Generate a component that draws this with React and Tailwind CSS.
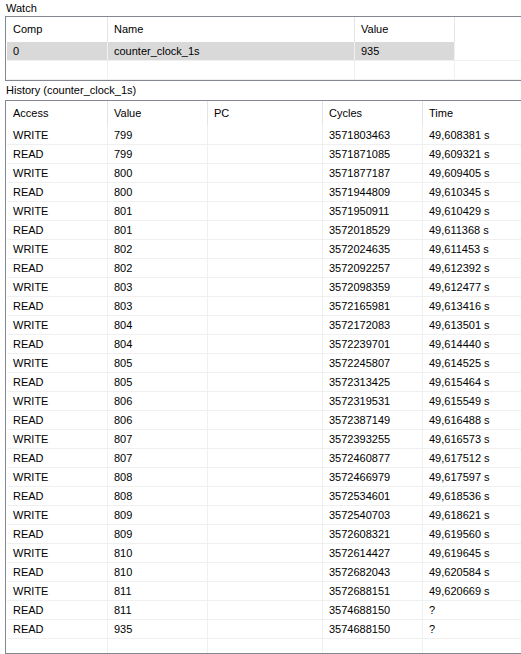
const watchCols = [
    { key: 'comp', label: 'Comp', w: 'w-[101px]' },
    { key: 'name', label: 'Name', w: 'w-[247px]' },
    { key: 'value', label: 'Value', w: 'w-[100px]' },
]

const historyCols = [
    { key: 'access', label: 'Access', w: 'w-[101px]' },
    { key: 'value', label: 'Value', w: 'w-[100px]' },
    { key: 'pc', label: 'PC', w: 'w-[115px]' },
    { key: 'cycles', label: 'Cycles', w: 'w-[100px]' },
    { key: 'time', label: 'Time', w: 'w-[100px]' },
]

const raw = [
    ['WRITE', '799', '3571803463', '49,608381 s'],
    ['READ', '799', '3571871085', '49,609321 s'],
    ['WRITE', '800', '3571877187', '49,609405 s'],
    ['READ', '800', '3571944809', '49,610345 s'],
    ['WRITE', '801', '3571950911', '49,610429 s'],
    ['READ', '801', '3572018529', '49,611368 s'],
    ['WRITE', '802', '3572024635', '49,611453 s'],
    ['READ', '802', '3572092257', '49,612392 s'],
    ['WRITE', '803', '3572098359', '49,612477 s'],
    ['READ', '803', '3572165981', '49,613416 s'],
    ['WRITE', '804', '3572172083', '49,613501 s'],
    ['READ', '804', '3572239701', '49,614440 s'],
    ['WRITE', '805', '3572245807', '49,614525 s'],
    ['READ', '805', '3572313425', '49,615464 s'],
    ['WRITE', '806', '3572319531', '49,615549 s'],
    ['READ', '806', '3572387149', '49,616488 s'],
    ['WRITE', '807', '3572393255', '49,616573 s'],
    ['READ', '807', '3572460877', '49,617512 s'],
    ['WRITE', '808', '3572466979', '49,617597 s'],
    ['READ', '808', '3572534601', '49,618536 s'],
    ['WRITE', '809', '3572540703', '49,618621 s'],
    ['READ', '809', '3572608321', '49,619560 s'],
    ['WRITE', '810', '3572614427', '49,619645 s'],
    ['READ', '810', '3572682043', '49,620584 s'],
    ['WRITE', '811', '3572688151', '49,620669 s'],
    ['READ', '811', '3574688150', '?'],
    ['READ', '935', '3574688150', '?'],
]

const history = raw.map(([access, value, cycles, time]) => ({ access, value, pc: '', cycles, time }))

const HeaderRow = ({ cols }) => (
    <div className="flex h-[25px] shrink-0">
        {cols.map((c) => (
            <div key={c.key} className={`${c.w} shrink-0 border-r border-[#e5e5e5] pl-[6px] flex items-center`}>
                {c.label}
            </div>
        ))}
    </div>
)

const Row = ({ cols, row = {}, selected = false, grow = false }) => (
    <div className={`flex shrink-0 ${grow ? 'flex-1' : 'h-[19px] border-b border-[#f0f0f0]'}`}>
        {cols.map((c) => (
            <div
                key={c.key}
                className={`${c.w} shrink-0 border-r border-[#f0f0f0] pl-[6px] flex items-center whitespace-nowrap ${selected ? 'bg-[#d9d9d9]' : ''}`}
            >
                {row[c.key]}
            </div>
        ))}
    </div>
)

export default function App() {
    return (
        <div className="h-[654px] w-[521px] overflow-hidden bg-white flex flex-col text-[11px] text-black font-['Liberation_Sans',Arial,sans-serif]">
            <div className="h-4 shrink-0 pl-[6px] leading-4">Watch</div>
            <div className="ml-[5px] h-[65px] shrink-0 border-l border-y border-[#828790] pl-px flex flex-col overflow-hidden">
                <HeaderRow cols={watchCols} />
                <Row cols={watchCols} row={{ comp: '0', name: 'counter_clock_1s', value: '935' }} selected />
                <Row cols={watchCols} />
            </div>
            <div className="h-[19px] shrink-0 pl-[6px] flex items-center">History (counter_clock_1s)</div>
            <div className="ml-[5px] flex-1 min-h-0 border-l border-y border-[#828790] pl-px flex flex-col overflow-hidden">
                <HeaderRow cols={historyCols} />
                {history.map((r, i) => (
                    <Row key={i} cols={historyCols} row={r} />
                ))}
                <Row cols={historyCols} grow />
            </div>
        </div>
    )
}
